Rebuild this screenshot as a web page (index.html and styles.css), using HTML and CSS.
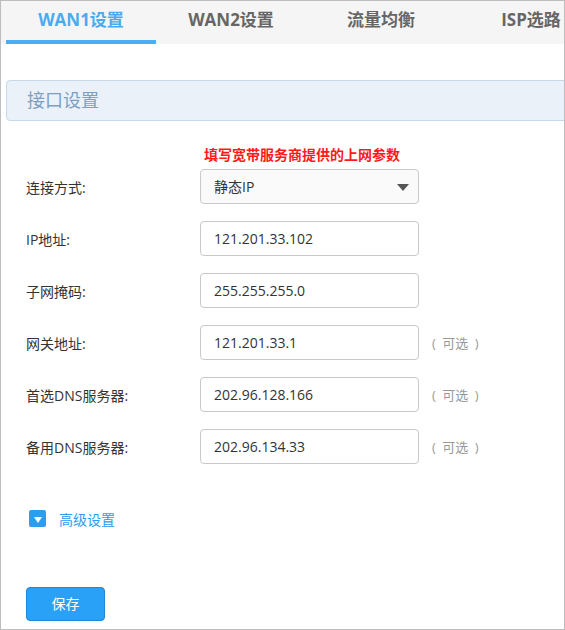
FILE: index.html
```html
<!DOCTYPE html>
<html lang="zh-CN">
<head>
<meta charset="utf-8">
<title>WAN1设置</title>
<link rel="stylesheet" href="styles.css">
</head>
<body>
<div class="frame">
  <div class="tabs">
    <div class="tab active">WAN1设置</div>
    <div class="tab">WAN2设置</div>
    <div class="tab">流量均衡</div>
    <div class="tab">ISP选路</div>
  </div>
  <div class="panel-head">接口设置</div>
  <div class="notice">填写宽带服务商提供的上网参数</div>
  <div class="form">
    <div class="row">
      <div class="label">连接方式:</div>
      <div class="field select">静态IP<span class="caret"></span></div>
    </div>
    <div class="row">
      <div class="label">IP地址:</div>
      <div class="field">121.201.33.102</div>
    </div>
    <div class="row">
      <div class="label">子网掩码:</div>
      <div class="field">255.255.255.0</div>
    </div>
    <div class="row">
      <div class="label">网关地址:</div>
      <div class="field">121.201.33.1</div>
      <div class="hint">(&ensp;可选&ensp;)</div>
    </div>
    <div class="row">
      <div class="label">首选DNS服务器:</div>
      <div class="field">202.96.128.166</div>
      <div class="hint">(&ensp;可选&ensp;)</div>
    </div>
    <div class="row">
      <div class="label">备用DNS服务器:</div>
      <div class="field">202.96.134.33</div>
      <div class="hint">(&ensp;可选&ensp;)</div>
    </div>
  </div>
  <div class="advanced">
    <span class="adv-icon"><span class="adv-tri"></span></span>
    <span class="adv-text">高级设置</span>
  </div>
  <div class="actions">
    <div class="btn">保存</div>
  </div>
</div>
</body>
</html>
```
FILE: styles.css
```css
* { box-sizing: border-box; }
html, body { margin: 0; padding: 0; background: #fff; }
body {
  font-family: "Open Sans", "Noto Sans CJK SC", sans-serif;
  color: #333;
}
.frame {
  width: 565px;
  height: 630px;
  border: 1px solid #bdbdbd;
  overflow: hidden;
}
.tabs {
  height: 43px;
  background: #f5f5f5;
  display: flex;
  padding-left: 5px;
}
.tab {
  flex: 0 0 150px;
  height: 43px;
  line-height: 37px;
  text-align: center;
  font-size: 17px;
  font-weight: bold;
  color: #666;
  border-bottom: 4px solid transparent;
  white-space: nowrap;
}
.tab.active {
  color: #4aabf0;
  border-bottom-color: #4aaef5;
}
.panel-head {
  margin: 36px 0 0 5px;
  width: 620px;
  height: 41px;
  border: 1px solid #c6d9ea;
  border-radius: 4px;
  background: #eaf1f8;
  padding-left: 20px;
  font-size: 18px;
  line-height: 39px;
  color: #7f9fc1;
}
.notice {
  margin-top: 24px;
  padding-left: 203px;
  font-size: 14px;
  font-weight: bold;
  line-height: 20px;
  color: #ff1a1a;
}
.form {
  margin-top: 4px;
  padding-left: 25px;
  display: flex;
  flex-direction: column;
  gap: 17px;
}
.row {
  display: flex;
  align-items: center;
  height: 35px;
}
.label {
  width: 174px;
  font-size: 14px;
  color: #333;
}
.field {
  position: relative;
  width: 219px;
  height: 35px;
  border: 1px solid #c9c9c9;
  border-radius: 4px;
  padding-left: 13px;
  font-size: 14px;
  line-height: 33px;
  color: #333;
  background: #fff;
}
.field.select { background: #fafafa; }
.caret {
  position: absolute;
  right: 9px;
  top: 14px;
  width: 0;
  height: 0;
  border-left: 6px solid transparent;
  border-right: 6px solid transparent;
  border-top: 7px solid #555;
}
.hint {
  margin-left: 13px;
  font-size: 13px;
  white-space: pre;
  color: #999;
}
.advanced {
  margin-top: 46px;
  padding-left: 28px;
  display: flex;
  align-items: center;
  height: 17px;
}
.adv-icon {
  width: 17px;
  height: 17px;
  border-radius: 2px;
  background: #2a9ff0;
  display: flex;
  align-items: center;
  justify-content: center;
}
.adv-tri {
  width: 0;
  height: 0;
  margin-top: 2px;
  border-left: 4px solid transparent;
  border-right: 4px solid transparent;
  border-top: 6px solid #fff;
}
.adv-text {
  margin-left: 13px;
  font-size: 14px;
  color: #2d9bef;
}
.actions {
  margin-top: 60px;
  padding-left: 25px;
}
.btn {
  width: 79px;
  height: 34px;
  border: 1px solid #1b87d6;
  border-radius: 4px;
  background: #29a1f7;
  color: #fff;
  font-size: 14px;
  line-height: 32px;
  text-align: center;
}
```
